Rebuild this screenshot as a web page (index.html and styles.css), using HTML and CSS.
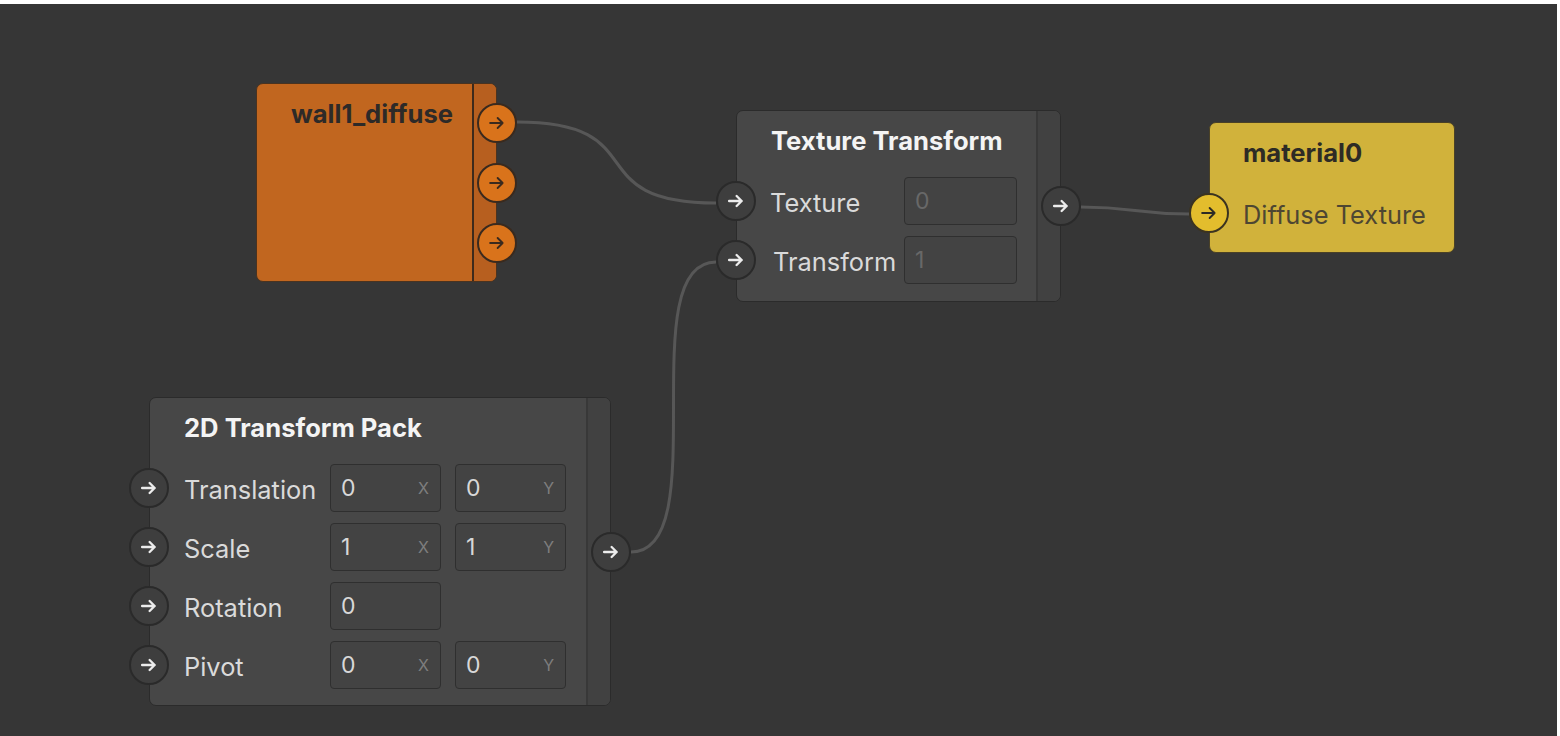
FILE: index.html
```html
<!DOCTYPE html>
<html lang="en">
<head>
<meta charset="utf-8">
<title>Node graph</title>
<link rel="stylesheet" href="styles.css">
</head>
<body>
<div class="canvas">
  <svg class="edges" width="1557" height="732" viewBox="0 0 1557 732">
    <path d="M517 118 C657 118, 576 199, 716 199"/>
    <path d="M631 548 C716 548, 631 258, 716 258"/>
    <path d="M1081 203 C1135 203, 1135 210, 1189 210"/>
  </svg>

  <div class="node node-orange n-wall">
    <div class="node-body">
      <div class="node-title">wall1_diffuse</div>
    </div>
    <div class="strip">
      <span class="port"><svg class="arrow" viewBox="0 0 16 16"><path d="M2.5 8h10M8.5 4l4 4-4 4"/></svg></span>
      <span class="port"><svg class="arrow" viewBox="0 0 16 16"><path d="M2.5 8h10M8.5 4l4 4-4 4"/></svg></span>
      <span class="port"><svg class="arrow" viewBox="0 0 16 16"><path d="M2.5 8h10M8.5 4l4 4-4 4"/></svg></span>
    </div>
  </div>

  <div class="node node-dark n-tt">
    <div class="node-body">
      <div class="node-title">Texture Transform</div>
      <div class="rows">
        <div class="row">
          <span class="port"><svg class="arrow" viewBox="0 0 16 16"><path d="M2.5 8h10M8.5 4l4 4-4 4"/></svg></span>
          <span class="label">Texture</span>
          <span class="field muted"><span>0</span></span>
        </div>
        <div class="row">
          <span class="port"><svg class="arrow" viewBox="0 0 16 16"><path d="M2.5 8h10M8.5 4l4 4-4 4"/></svg></span>
          <span class="label label-shift">Transform</span>
          <span class="field muted"><span>1</span></span>
        </div>
      </div>
    </div>
    <div class="strip">
      <span class="port"><svg class="arrow" viewBox="0 0 16 16"><path d="M2.5 8h10M8.5 4l4 4-4 4"/></svg></span>
    </div>
  </div>

  <div class="node node-yellow n-mat">
    <div class="node-body">
      <div class="node-title">material0</div>
      <div class="rows">
        <div class="row">
          <span class="port"><svg class="arrow" viewBox="0 0 16 16"><path d="M2.5 8h10M8.5 4l4 4-4 4"/></svg></span>
          <span class="label">Diffuse Texture</span>
        </div>
      </div>
    </div>
  </div>

  <div class="node node-dark n-pack">
    <div class="node-body">
      <div class="node-title">2D Transform Pack</div>
      <div class="rows">
        <div class="row">
          <span class="port"><svg class="arrow" viewBox="0 0 16 16"><path d="M2.5 8h10M8.5 4l4 4-4 4"/></svg></span>
          <span class="label">Translation</span>
          <span class="field"><span>0</span><span class="axis">X</span></span>
          <span class="field"><span>0</span><span class="axis">Y</span></span>
        </div>
        <div class="row">
          <span class="port"><svg class="arrow" viewBox="0 0 16 16"><path d="M2.5 8h10M8.5 4l4 4-4 4"/></svg></span>
          <span class="label">Scale</span>
          <span class="field"><span>1</span><span class="axis">X</span></span>
          <span class="field"><span>1</span><span class="axis">Y</span></span>
        </div>
        <div class="row">
          <span class="port"><svg class="arrow" viewBox="0 0 16 16"><path d="M2.5 8h10M8.5 4l4 4-4 4"/></svg></span>
          <span class="label">Rotation</span>
          <span class="field"><span>0</span></span>
        </div>
        <div class="row">
          <span class="port"><svg class="arrow" viewBox="0 0 16 16"><path d="M2.5 8h10M8.5 4l4 4-4 4"/></svg></span>
          <span class="label">Pivot</span>
          <span class="field"><span>0</span><span class="axis">X</span></span>
          <span class="field"><span>0</span><span class="axis">Y</span></span>
        </div>
      </div>
    </div>
    <div class="strip">
      <span class="port"><svg class="arrow" viewBox="0 0 16 16"><path d="M2.5 8h10M8.5 4l4 4-4 4"/></svg></span>
    </div>
  </div>
</div>
</body>
</html>
```

FILE: styles.css
```css
* { box-sizing: border-box; }

html, body {
  margin: 0;
  padding: 0;
  background: #ffffff;
}

body {
  font-family: Inter, "Noto Sans", sans-serif;
}

.canvas {
  position: relative;
  width: 1557px;
  height: 732px;
  margin-top: 4px;
  background: #363636;
  overflow: hidden;
}

.edges {
  position: absolute;
  left: 0;
  top: 0;
}

.edges path {
  fill: none;
  stroke: #575757;
  stroke-width: 3;
}

/* ---------- nodes ---------- */
.node {
  position: absolute;
  display: flex;
  border: 1px solid #2b2b2b;
  border-radius: 7px;
}

.node-body {
  flex: 1;
  display: flex;
  flex-direction: column;
  padding-top: 15px;
}

.node-title {
  height: 30px;
  line-height: 30px;
  padding-left: 34px;
  font-size: 25.6px;
  font-weight: 700;
  white-space: nowrap;
}

.rows {
  display: flex;
  flex-direction: column;
  gap: 11px;
  margin-top: 21px;
}

.row {
  display: flex;
  align-items: center;
  height: 48px;
}

.label {
  flex: none;
  margin-left: 14px;
  padding-top: 2px;
  font-size: 25.4px;
  white-space: nowrap;
}

.strip {
  flex: none;
  width: 24px;
  border-left: 2px solid #383838;
  border-radius: 0 6px 6px 0;
  display: flex;
  flex-direction: column;
  justify-content: center;
  align-items: flex-end;
  gap: 20px;
}

/* ---------- ports ---------- */
.port {
  flex: none;
  width: 40px;
  height: 40px;
  border-radius: 50%;
  border: 2px solid #2a2a2a;
  background: #3e3e3e;
  color: #ececec;
  display: flex;
  align-items: center;
  justify-content: center;
}

.row .port { margin-left: -21px; }
.strip .port { margin-right: -21px; }

.arrow {
  width: 20px;
  height: 20px;
  fill: none;
  stroke: currentColor;
  stroke-width: 1.9;
  stroke-linecap: round;
  stroke-linejoin: round;
}

/* ---------- fields ---------- */
.field {
  flex: none;
  width: 111px;
  height: 48px;
  margin-right: 14px;
  border: 1px solid #2f2f2f;
  border-radius: 4px;
  background: #434343;
  display: flex;
  align-items: center;
  justify-content: space-between;
  padding: 0 11px 0 10px;
  font-size: 23px;
  color: #d8d8d8;
}

.field .axis {
  font-size: 16px;
  color: #7e7e7e;
}

.field.muted {
  color: #686868;
  width: 113px;
}

/* ---------- dark theme ---------- */
.node-dark { background: #474747; }
.node-dark .node-title { color: #f4f4f4; }
.node-dark .label { color: #dadada; }
.node-dark .strip { background: #414141; }

/* ---------- orange ---------- */
.node-orange {
  background: #c1661f;
  border-color: #4a3320;
}
.node-orange .node-title { color: #2d2a28; }
.node-orange .strip {
  background: #b75f1f;
  border-left-color: #3d2a1c;
}
.node-orange .port {
  background: #d9731b;
  border-color: #3a2a1e;
  color: #3a2a1e;
}
.node-orange .arrow { stroke-width: 1.5; }

/* ---------- yellow ---------- */
.node-yellow {
  background: #d1b23b;
  border-color: #4a4126;
}
.node-yellow .node-title { color: #2d2b25; padding-left: 33px; }
.node-yellow .label { color: #4d4632; margin-left: 14px; }
.node-yellow .port {
  background: #e3bd2d;
  border-color: #3b3320;
  color: #2d2b25;
}
.node-yellow .arrow { stroke-width: 1.5; }

/* ---------- placement on the canvas ---------- */
.n-wall { left: 256px; top: 79px;  width: 241px; height: 199px; }
.n-tt   { left: 736px; top: 106px; width: 325px; height: 192px; }
.n-mat  { left: 1209px; top: 118px; width: 246px; height: 131px; }
.n-pack { left: 149px; top: 393px; width: 462px; height: 309px; }

.n-tt .label { width: 134px; }
.n-tt .label-shift { text-indent: 3px; }
.n-pack .label { width: 146px; margin-left: 15px; }
```
